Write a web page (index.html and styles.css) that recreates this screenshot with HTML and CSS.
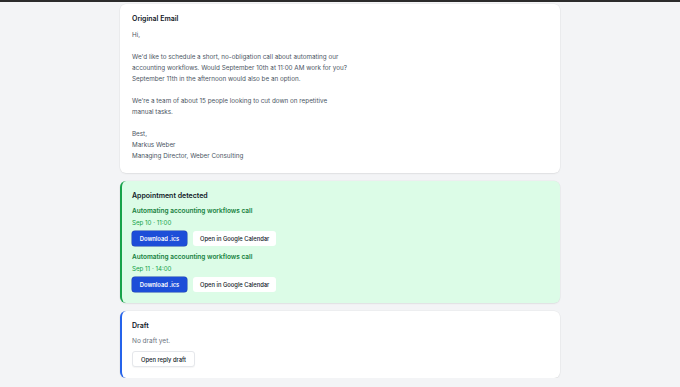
FILE: index.html
```html
<!DOCTYPE html>
<html>
<head>
    <title>Email</title>
    <meta charset="utf-8">
    <meta name="viewport" content="width=device-width, initial-scale=1">
    <link rel="stylesheet" href="styles.css">
</head>

<body>

    <div class="topbar"></div>

    <main class="page">

        <section class="card">
            <h2 class="card-title">Original Email</h2>
            <div class="email-body">
                <p>Hi,</p>
                <p>We'd like to schedule a short, no-obligation call about automating our<br>
                accounting workflows. Would September 10th at 11:00 AM work for you?<br>
                September 11th in the afternoon would also be an option.</p>
                <p>We're a team of about 15 people looking to cut down on repetitive<br>
                manual tasks.</p>
                <p>Best,<br>
                Markus Weber<br>
                Managing Director, Weber Consulting</p>
            </div>
        </section>

        <section class="card card-green">
            <h2 class="card-title">Appointment detected</h2>

            <div class="event">
                <div class="event-title">Automating accounting workflows call</div>
                <div class="event-date">Sep 10 · 11:00</div>
                <div class="actions">
                    <button class="btn btn-primary">Download .ics</button>
                    <button class="btn">Open in Google Calendar</button>
                </div>
            </div>

            <div class="event">
                <div class="event-title">Automating accounting workflows call</div>
                <div class="event-date">Sep 11 · 14:00</div>
                <div class="actions">
                    <button class="btn btn-primary">Download .ics</button>
                    <button class="btn">Open in Google Calendar</button>
                </div>
            </div>
        </section>

        <section class="card card-blue">
            <h2 class="card-title">Draft</h2>
            <p class="muted">No draft yet.</p>
            <div class="actions draft-actions">
                <button class="btn btn-outline">Open reply draft</button>
            </div>
        </section>

    </main>

</body>
</html>
```

FILE: styles.css
```css
* {
    box-sizing: border-box;
}

body {
    margin: 0;
    background-color: #f3f4f6;
    font-family: Inter, "Noto Sans", sans-serif;
    color: #1f2937;
}

.topbar {
    height: 2px;
    background-color: #2b2b2b;
}

.page {
    width: 440px;
    margin: 0 auto;
    padding-top: 2px;
    display: flex;
    flex-direction: column;
    gap: 8px;
}

.card {
    background-color: white;
    border-radius: 6px;
    padding: 10px 12px 11px 12px;
    box-shadow: 0 0 0 0.5px rgba(0, 0, 0, 0.05), 0 1px 2px rgba(0, 0, 0, 0.06);
}

.card-green {
    background-color: #dcfce7;
    border-left: 2px solid #16a34a;
    padding-left: 10px;
}

.card-blue {
    border-left: 2px solid #2563eb;
    padding-left: 10px;
}

.card-title {
    margin: 0 0 5px 0;
    font-size: 7px;
    line-height: 10px;
    font-weight: 600;
    color: #111827;
}

.email-body {
    margin-top: 6px;
    font-size: 6.3px;
    line-height: 11px;
    color: #4b5563;
}

.email-body p {
    margin: 0 0 11px 0;
}

.email-body p:last-child {
    margin-bottom: 0;
}

.event {
    margin-bottom: 6px;
}

.event:last-child {
    margin-bottom: 0;
}

.event-title {
    font-size: 6.5px;
    line-height: 11px;
    font-weight: 600;
    color: #15803d;
}

.event-date {
    font-size: 6.2px;
    line-height: 11px;
    color: #16a34a;
}

.actions {
    display: flex;
    gap: 6px;
    margin-top: 3px;
}

.draft-actions {
    margin-top: 4px;
}

.btn {
    height: 15px;
    padding: 0 7px;
    font-family: inherit;
    font-size: 5.8px;
    font-weight: 500;
    color: #111827;
    background-color: white;
    border: none;
    border-radius: 3px;
}

.btn-primary {
    width: 55px;
    padding: 0;
    background-color: #1d4ed8;
    color: white;
    font-weight: 600;
    box-shadow: 0 0 0 0.5px #1e40af;
}

.btn-outline {
    height: 16px;
    padding: 0 8px;
    border: 0.5px solid #e5e7eb;
    box-shadow: 0 1px 1px rgba(0, 0, 0, 0.04);
}

.muted {
    margin: 0;
    font-size: 6.5px;
    line-height: 11px;
    color: #6b7280;
}
```
